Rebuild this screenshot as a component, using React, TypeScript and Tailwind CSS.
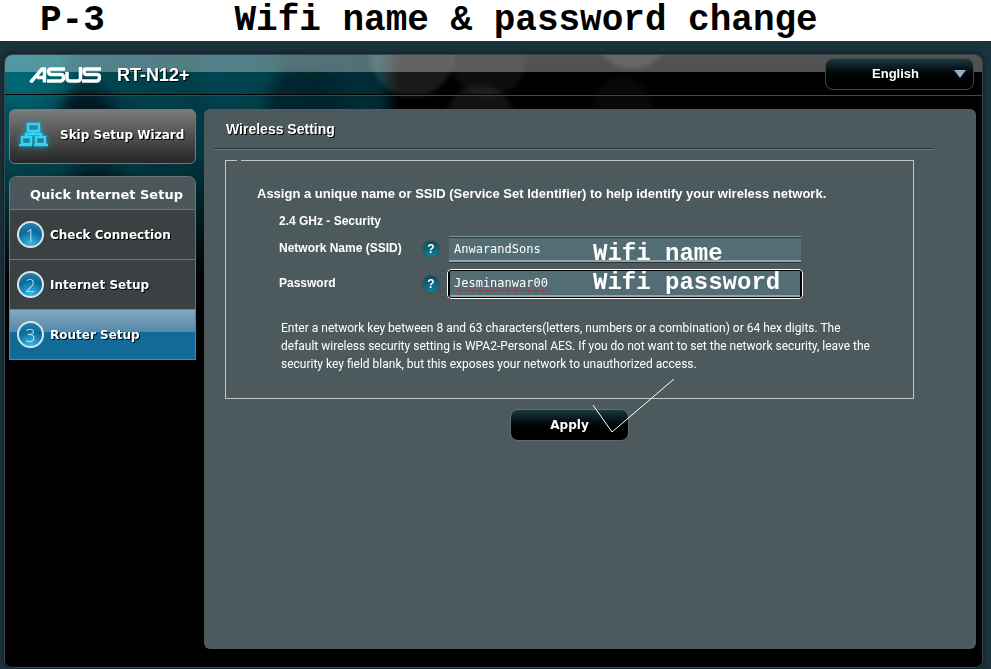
const steps = [
  { num: 1, name: 'Check Connection' },
  { num: 2, name: 'Internet Setup' },
  { num: 3, name: 'Router Setup', active: true },
]

const languages = ['English']

const arial = 'font-[Arial,"Liberation_Sans",sans-serif]'

function Backdrop() {
  return (
    <svg className="absolute inset-0 h-full w-full" viewBox="0 0 979 613" preserveAspectRatio="xMinYMin slice" aria-hidden="true">
      <defs>
        <linearGradient id="teal" x1="0" x2="1" y1="0" y2="0">
          <stop offset="0" stopColor="#005763" />
          <stop offset="0.3" stopColor="#004752" />
          <stop offset="0.65" stopColor="#003a44" />
          <stop offset="0.95" stopColor="#002d35" />
          <stop offset="1" stopColor="#000" />
        </linearGradient>
        <linearGradient id="fade" x1="0" x2="0" y1="0" y2="1">
          <stop offset="0" stopColor="#000" stopOpacity="0" />
          <stop offset="0.4" stopColor="#000" stopOpacity="0.1" />
          <stop offset="1" stopColor="#000" />
        </linearGradient>
        <filter id="soft"><feGaussianBlur stdDeviation="7" /></filter>
        <filter id="edge"><feGaussianBlur stdDeviation="2" /></filter>
      </defs>
      <rect width="979" height="613" fill="#000" />
      <rect width="395" height="220" fill="url(#teal)" />
      <g filter="url(#soft)">
        <circle cx="22" cy="10" r="42" fill="#007d8c" opacity="0.5" />
        <circle cx="82" cy="60" r="28" fill="#001219" opacity="0.8" />
        <circle cx="118" cy="76" r="22" fill="#00171e" opacity="0.7" />
        <circle cx="90" cy="140" r="30" fill="#001219" opacity="0.7" />
        <circle cx="232" cy="20" r="40" fill="#005560" opacity="0.4" />
        <circle cx="300" cy="50" r="40" fill="#001c23" opacity="0.6" />
      </g>
      <rect width="400" height="230" fill="url(#fade)" />
      <g fill="#fff" filter="url(#edge)">
        <circle cx="408" cy="0" r="42" opacity="0.1" />
        <circle cx="484" cy="4" r="38" opacity="0.05" />
        <circle cx="476" cy="64" r="34" opacity="0.07" />
        <circle cx="628" cy="-24" r="38" opacity="0.12" />
        <circle cx="618" cy="52" r="30" opacity="0.03" />
      </g>
      <rect width="979" height="17" fill="#fff" opacity="0.32" />
    </svg>
  )
}

function AsusLogo() {
  return (
    <svg className="h-4 w-18" viewBox="0 0 72 16" fill="none" stroke="#fff" strokeWidth="3.5" role="img" aria-label="ASUS">
      <path d="M1.5 15.5 13 2H17M15.500 2v13.500M8 10.500h7" />
      <path d="M36 2H22Q19.500 2 19.500 4.500T22 7.500h10q2.500 0 2.500 3t-2.500 3.500H18" />
      <path d="M38 5v6q0 3 3 3h7.500q3 0 3-3V0" />
      <path d="M72 2H57q-2 0-2 2.500t2 3h11q2.500 0 2.500 3t-2.500 3.500H53" />
    </svg>
  )
}

function NetworkIcon() {
  return (
    <svg className="h-7 w-8 shrink-0 drop-shadow-[0_0_3px_#00b4e0]" viewBox="0 0 32 28" fill="none" stroke="#35d4f5" strokeWidth="2.5" aria-hidden="true">
      <path d="M10 3h11v7H10zM4 16h9v7H4zM18 16h9v7h-9z" />
      <path d="M15.500 10v3.500M8 16v-3h15v3M1 24h13M16 24h14" />
    </svg>
  )
}

function Help({ label }: { label: string }) {
  return (
    <button
      type="button"
      aria-label={label}
      className="flex size-4 items-center justify-center rounded-full bg-linear-to-b from-[#0a4a60] to-[#0c8296] text-xs font-bold leading-none text-white shadow-[0_0_2px_#213a42]"
    >
      ?
    </button>
  )
}

const note = 'pointer-events-none absolute left-36 font-["Courier_New","Liberation_Mono",monospace] text-2xl leading-6 font-bold whitespace-pre text-white'

export default function App() {
  return (
    <div className={`min-h-screen bg-[#1b333d] text-white ${arial}`}>
      <h1 className='bg-white pl-10 font-["Courier_New","Liberation_Mono",monospace] text-4xl leading-[41px] font-bold whitespace-pre text-black'>
        {'P-3      Wifi name & password change'}
      </h1>
      <div className="pt-[13px] pr-2 pl-1">
        <div className="relative overflow-hidden rounded-lg border border-[#39474c] bg-black shadow-[0_0_6px_#0a1a20]">
          <Backdrop />
          <div className="relative">
            <header className="flex h-10 items-center justify-between border-b border-black pr-2 pl-6 shadow-[0_1px_0_#3c4a52]">
              <div className="flex items-center gap-4">
                <AsusLogo />
                <span className="text-lg font-bold [text-shadow:1px_1px_0_#000]">RT-N12+</span>
              </div>
              <div className="relative mb-0.5">
                <select
                  aria-label="Language"
                  className="block h-8 w-[149px] appearance-none rounded-lg border border-[#3d4a4d] bg-linear-to-b from-[#1c3a40] to-black to-75% pr-2 text-[13px] font-bold [text-align-last:center]"
                >
                  {languages.map((lang) => <option key={lang}>{lang}</option>)}
                </select>
                <svg className="pointer-events-none absolute top-3 right-2 h-2 w-3" viewBox="0 0 12 8" aria-hidden="true">
                  <path d="M0 0h12L6 8z" fill="#8fb3c8" />
                </svg>
              </div>
            </header>

            <div className="flex gap-2 pt-3.5 pr-1.5 pb-[18px] pl-1">
              <aside className='w-[187px] shrink-0 font-[Verdana,"DejaVu_Sans",sans-serif] font-bold'>
                <button
                  type="button"
                  className="flex h-[55px] w-full items-center gap-2.5 rounded-md border border-[#73797b] bg-linear-to-b from-[#7c7c7c] to-[#272727] pb-1 pl-2 text-xs [text-shadow:1px_1px_0_#000]"
                >
                  <NetworkIcon />
                  <span className="whitespace-nowrap">Skip Setup Wizard</span>
                </button>

                <nav className="mt-3 rounded-t-lg border border-b-0 border-[#6c7679] bg-[#3b4142]">
                  <h2 className="h-8 rounded-t-lg bg-[#4c575b] pl-5 text-[13px] leading-9 whitespace-nowrap">Quick Internet Setup</h2>
                  <ul>
                    {steps.map(({ num, name, active }) => (
                      <li
                        key={num}
                        className={active
                          ? '-mx-px border border-[#3d91b0] bg-linear-to-b from-[#82a9c2] via-[#5588a8] via-45% to-[#116a98] to-45%'
                          : 'border-t border-[#6c7679]'}
                      >
                        <a href="#" className="flex h-[49px] items-center gap-1.5 pl-[7px] text-xs [text-shadow:1px_1px_0_#000]">
                          <span className='flex size-[27px] items-center justify-center rounded-full border-2 border-[#dce6ea] bg-[radial-gradient(circle_at_50%_100%,#3cc0ee,#0a699c_60%,#3289b0)] font-["Open_Sans",sans-serif] text-lg font-light text-[#cfe5ee] [text-shadow:none]'>
                            {num}
                          </span>
                          {name}
                        </a>
                      </li>
                    ))}
                  </ul>
                </nav>
              </aside>

              <main className="min-h-[540px] min-w-0 flex-1 rounded-md bg-[#4c5a5e]">
                <h2 className="mr-[42px] ml-2.5 h-10 border-b border-[#2c373b] pl-3 text-sm leading-10 font-bold shadow-[0_1px_0_#69777b] [text-shadow:1px_1px_0_#000]">Wireless Setting</h2>
                <form onSubmit={(e) => e.preventDefault()}>
                  <fieldset className="mt-[11px] mr-[62px] ml-[21px] border border-[#c5c5c5] pb-[25px] pl-[31px]">
                    <legend className="-ml-5 h-px w-1" />
                    <p className="pt-6 text-[13px] leading-[18px] font-bold whitespace-nowrap">
                      Assign a unique name or SSID (Service Set Identifier) to help identify your wireless network.
                    </p>
                    <div className="pl-[22px] text-xs font-bold">
                      <h3 className="pt-2.5 leading-4">2.4 GHz - Security</h3>
                      <div className="mt-[7px] flex h-[26px] items-center">
                        <label htmlFor="ssid" className="w-36 pb-0.5">Network Name (SSID)</label>
                        <Help label="About the network name" />
                        <div className="relative ml-2.5 flex h-[26px] w-[352px]">
                          <input
                            id="ssid"
                            defaultValue="AnwarandSons"
                            className='w-full border-t border-b-2 border-t-[#84969b] border-b-[#95a5a9] bg-[#526d73] px-[5px] font-["Lucida_Console","DejaVu_Sans_Mono",monospace] text-xs font-normal shadow-[0_1px_0_#27343a,inset_0_1px_0_#29373c] outline-none'
                          />
                          <span className={`${note} top-1.5`}>Wifi name</span>
                        </div>
                      </div>
                      <div className="mt-[9px] flex h-[26px] items-center">
                        <label htmlFor="password" className="w-36 pb-0.5">Password</label>
                        <Help label="About the password" />
                        <div className="relative ml-2.5 flex h-[26px] w-[352px] rounded-xs bg-black px-px ring-2 ring-black outline-1 outline-offset-1 outline-white">
                          <input
                            id="password"
                            defaultValue="Jesminanwar00"
                            className='w-full border-b-2 border-b-[#95a5a9] bg-[#526d73] px-1 font-["Lucida_Console","DejaVu_Sans_Mono",monospace] text-xs font-normal underline decoration-[#f00] decoration-wavy decoration-1 underline-offset-2 outline-none [text-decoration-skip-ink:none]'
                          />
                          <span className={`${note} top-0`}>Wifi password</span>
                        </div>
                      </div>
                    </div>
                    <p className='mt-[22px] pl-6 font-["Segoe_UI",Roboto,sans-serif] text-xs leading-[18px] whitespace-nowrap'>
                      Enter a network key between 8 and 63 characters(letters, numbers or a combination) or 64 hex digits. The<br />
                      default wireless security setting is WPA2-Personal AES. If you do not want to set the network security, leave the<br />
                      security key field blank, but this exposes your network to unauthorized access.
                    </p>
                  </fieldset>
                  <div className="mt-2.5 mr-[62px] ml-[21px] flex justify-center">
                    <div className="relative">
                      <button
                        type="submit"
                        className='block h-8 w-[119px] rounded-lg border border-[#5f6b6f] bg-linear-to-b from-[#1c3a40] to-black to-75% font-[Verdana,"DejaVu_Sans",sans-serif] text-xs font-bold'
                      >
                        Apply
                      </button>
                      <svg className="pointer-events-none absolute -top-8 left-[82px] h-14 w-[84px]" viewBox="0 0 84 56" fill="none" stroke="#fff" aria-hidden="true">
                        <path d="M1 28 20 55 82 2" />
                      </svg>
                    </div>
                  </div>
                </form>
              </main>
            </div>
          </div>
        </div>
      </div>
    </div>
  )
}
